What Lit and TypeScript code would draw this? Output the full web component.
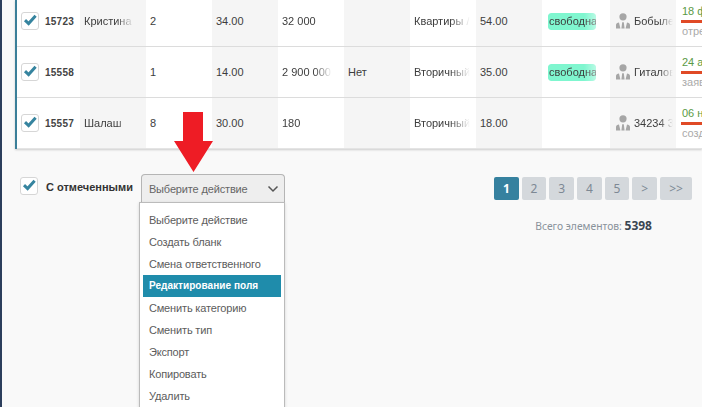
import { LitElement, html, css, svg } from "lit";
import { customElement } from "lit/decorators.js";

const rows = [
  { id: "15723", name: "Кристина", rooms: "2", area: "34.00", price: "32 000", flag: "", type: "Квартиры / Вторичный", kitchen: "54.00", free: true, person: "Бобылев Иван", date: "18 февраля", sub: "отрезок" },
  { id: "15558", name: "", rooms: "1", area: "14.00", price: "2 900 000", flag: "Нет", type: "Вторичный рынок", kitchen: "35.00", free: true, person: "Гиталов Олег", date: "24 августа", sub: "заявка" },
  { id: "15557", name: "Шалаш", rooms: "8", area: "30.00", price: "180", flag: "", type: "Вторичный рынок", kitchen: "18.00", free: false, person: "34234 324", date: "06 ноября", sub: "создан" },
];

const actions = ["Выберите действие", "Создать бланк", "Смена ответственного", "Редактирование поля", "Сменить категорию", "Сменить тип", "Экспорт", "Копировать", "Удалить"];

const check = svg`<svg viewBox="0 0 18 18" width="18" height="18"><path d="M4 8.2 7.6 11.6 14.6 3.8" fill="none" stroke="#36849f" stroke-width="3"/></svg>`;

const personIcon = svg`<svg viewBox="0 0 14 16" width="14" height="16"><circle cx="7" cy="3.8" r="3.6" fill="#a6a6a6"/><path d="M0 15.5V12C0 10.3 1.4 9.6 3 9.4L4.4 15.5Z M5.4 15.5 6.2 9.2H7.8L8.6 15.5Z M14 15.5V12C14 10.3 12.6 9.6 11 9.4L9.6 15.5Z" fill="#a6a6a6"/></svg>`;

@customElement("app-root")
export class AppRoot extends LitElement {
  static styles = css`
    :host { display: block; height: 407px; overflow: hidden; position: relative; background: #f9f9f9; font-family: "Liberation Sans", Arial, sans-serif; font-size: 11px; color: #3d3d3d; }
    .page { display: flex; height: 407px; border-left: 2px solid #2c3e5c; box-sizing: border-box; }
    .main { flex: 1; min-width: 0; padding-left: 13px; }
    .table { border-left: 2px solid #3b7f99; background: #fff; box-shadow: 0 1px 2px rgba(0,0,0,.18); }
    .row { display: grid; grid-template-columns: 63px 66px 66px 66px 66px 66px 66px 66px 68px 66px 1fr; height: 51px; border-bottom: 1px solid #dcdcdc; box-sizing: border-box; }
    .row:first-child { height: 47px; }
    .row:first-child .cell { padding-bottom: 4px; }
    .row:first-child .date { padding-bottom: 0; }
    .row:first-child .date .d { margin-top: 6px; }
    .row:last-child { border-bottom: 1px solid #e4e4e4; }
    .cell { display: flex; align-items: center; min-width: 0; overflow: hidden; white-space: nowrap; padding-left: 4px; box-sizing: border-box; }
    .cell:nth-child(even) { background: #f5f5f5; }
    .fade { display: block; width: 100%; overflow: hidden; -webkit-mask-image: linear-gradient(to right, #000 65%, transparent 100%); mask-image: linear-gradient(to right, #000 65%, transparent 100%); }
    .cut { padding-right: 12px; }
    .cut-s { padding-right: 6px; }
    .first { padding-left: 4px; gap: 6px; }
    .box { width: 18px; height: 18px; flex: none; box-sizing: border-box; border: 1px solid #d6d6d6; border-radius: 3px; background: #fff; display: flex; align-items: center; justify-content: center; }
    .box svg { flex: none; margin: -1px; }
    .id { font-size: 10px; font-weight: 700; letter-spacing: .25px; color: #444; }
    .badge { display: block; width: 48px; height: 17px; line-height: 17px; background: #7ff6cf; border-radius: 3px; margin-left: 2px; padding-left: 1px; box-sizing: border-box; overflow: hidden; white-space: nowrap; -webkit-mask-image: linear-gradient(to right, #000 75%, rgba(0,0,0,.55) 100%); mask-image: linear-gradient(to right, #000 75%, rgba(0,0,0,.55) 100%); }
    .person { padding-left: 6px; padding-right: 3px; gap: 4px; }
    .person svg { flex: none; }
    .date { display: block; padding: 0 0 0 5px; align-self: flex-start; }
    .date .d { color: #5a9a45; height: 11px; line-height: 11px; margin-top: 10px; padding-left: 1px; }
    .date .bar { height: 3px; background: #e04a26; margin-top: 3px; }
    .date .s { color: #aaa; height: 11px; line-height: 11px; margin-top: 3px; padding-left: 1px; }
    .footer { display: flex; justify-content: space-between; padding: 25px 10px 0 5px; }
    .left { display: flex; align-items: flex-start; }
    .lbl { display: flex; align-items: center; gap: 8px; height: 24px; font-weight: 700; color: #333; margin-top: 1px; }
    .lbl .box { margin-top: -2px; }
    .selectwrap { position: relative; margin-left: 8px; }
    .select { width: 144px; height: 29px; box-sizing: border-box; display: flex; align-items: center; justify-content: space-between; padding: 0 5px 0 7px; background: #eeeeee; border: 1px solid #b5b5b5; border-bottom-color: #aaa; border-radius: 4px 4px 0 0; color: #666; letter-spacing: -.15px; }
    .select svg { flex: none; }
    .menu { position: absolute; top: 28px; left: -2px; width: 146px; box-sizing: border-box; background: #fff; border: 1px solid #bbb; padding: 6px 3px; box-shadow: 0 1px 3px rgba(0,0,0,.15); }
    .item { height: 22px; line-height: 22px; padding-left: 6px; color: #5c5c5c; letter-spacing: -.15px; }
    .item.sel { background: #1f8cab; color: #fff; font-weight: 700; font-size: 10px; letter-spacing: .05px; }
    .right { display: flex; flex-direction: column; align-items: flex-end; }
    .pager { display: flex; gap: 3px; margin-top: 3px; font-family: "Noto Sans", "Open Sans", sans-serif; }
    .pg { width: 24.67px; height: 23px; line-height: 23px; text-align: center; background: #d4d8dc; color: #7d8894; border-radius: 2px; font-size: 12px; }
    .pg.on { background: #36819f; color: #fff; font-weight: 700; }
    .pg.wide { width: 32px; }
    .total { margin: 17px 40px 0 0; font-family: "Noto Sans", "Open Sans", sans-serif; font-size: 10.3px; color: #89929b; }
    .total b { color: #3a4652; font-size: 12px; }
    .arrow { position: absolute; left: 174px; top: 112px; }
  `;

  render() {
    return html`
      <div class="page">
        <div class="main">
          <div class="table">
            ${rows.map((r) => html`
              <div class="row">
                <div class="cell first"><span class="box">${check}</span><span class="id">${r.id}</span></div>
                <div class="cell cut"><span class="fade">${r.name}</span></div>
                <div class="cell">${r.rooms}</div>
                <div class="cell">${r.area}</div>
                <div class="cell cut"><span class="fade">${r.price}</span></div>
                <div class="cell">${r.flag}</div>
                <div class="cell cut-s"><span class="fade">${r.type}</span></div>
                <div class="cell">${r.kitchen}</div>
                <div class="cell">${r.free ? html`<span class="badge">свободна</span>` : ""}</div>
                <div class="cell person">${personIcon}<span class="fade">${r.person}</span></div>
                <div class="cell date"><div class="d">${r.date}</div><div class="bar"></div><div class="s">${r.sub}</div></div>
              </div>`)}
          </div>
          <div class="footer">
            <div class="left">
              <div class="lbl"><span class="box">${check}</span>С отмеченными</div>
              <div class="selectwrap">
                <div class="select">Выберите действие
                  <svg width="12" height="8" viewBox="0 0 12 8"><path d="M1.5 1.5 6 6 10.5 1.5" fill="none" stroke="#555" stroke-width="1.5"/></svg>
                </div>
                <div class="menu">
                  ${actions.map((a, i) => html`<div class="item ${i === 3 ? "sel" : ""}">${a}</div>`)}
                </div>
              </div>
            </div>
            <div class="right">
              <div class="pager">
                <div class="pg on">1</div><div class="pg">2</div><div class="pg">3</div><div class="pg">4</div><div class="pg">5</div><div class="pg">&gt;</div><div class="pg wide">&gt;&gt;</div>
              </div>
              <div class="total">Всего элементов: <b>5398</b></div>
            </div>
          </div>
        </div>
      </div>
      <svg class="arrow" width="39" height="60" viewBox="0 0 39 60"><path d="M9 0H29V29H39L19.5 60 0 29H9Z" fill="#ee1c25"/></svg>
    `;
  }
}
